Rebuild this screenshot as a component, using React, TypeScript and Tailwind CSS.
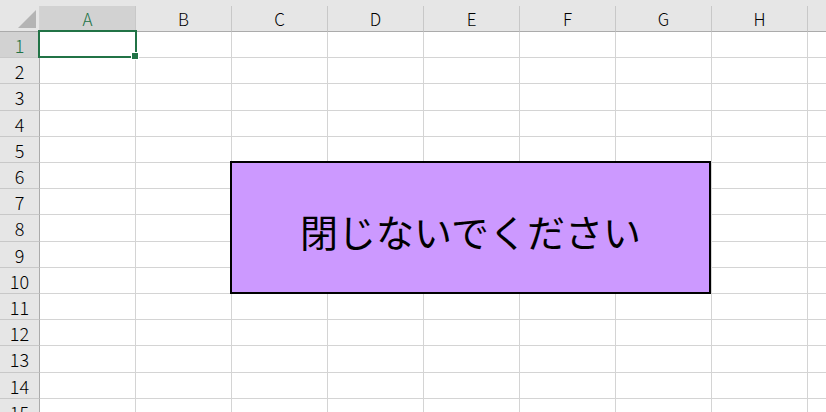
const COLS = ['A', 'B', 'C', 'D', 'E', 'F', 'G', 'H', 'I'];

// row heights include the 1px bottom gridline
const ROWS = [
  { n: 1, h: 'h-[26px]' },
  { n: 2, h: 'h-[26px]' },
  { n: 3, h: 'h-[27px]' },
  { n: 4, h: 'h-[26px]' },
  { n: 5, h: 'h-[26px]' },
  { n: 6, h: 'h-[26px]' },
  { n: 7, h: 'h-[26px]' },
  { n: 8, h: 'h-[27px]' },
  { n: 9, h: 'h-[26px]' },
  { n: 10, h: 'h-[26px]' },
  { n: 11, h: 'h-[26px]' },
  { n: 12, h: 'h-[26px]' },
  { n: 13, h: 'h-[27px]' },
  { n: 14, h: 'h-[26px]' },
  { n: 15, h: 'h-[26px]' },
];

export default function App() {
  return (
    <div className="relative w-[826px] h-[412px] overflow-hidden bg-white text-black font-['Noto_Sans_CJK_JP','Liberation_Sans',sans-serif]">
      <div className="h-[6px] bg-[#e6e6e6]" />

      {/* column headers */}
      <div className="flex h-[26px]">
        <div className="w-[40px] shrink-0 flex items-end justify-end pr-[3px] pb-[3px] bg-[#e6e6e6] border-r border-b border-r-[#d4d4d4] border-b-[#ababab]">
          <svg width="18" height="18" viewBox="0 0 18 18">
            <polygon points="18,0 18,18 0,18" fill="#b4b4b4" />
          </svg>
        </div>
        {COLS.map((c) => (
          <div
            key={c}
            className={`w-[96px] shrink-0 flex items-center justify-center text-[17px] font-light leading-none border-r border-b border-r-[#c8c8c8] border-b-[#ababab] ${
              c === 'A' ? 'bg-[#d2d2d2] text-[#217346]' : 'bg-[#e6e6e6]'
            }`}
          >
            {c}
          </div>
        ))}
      </div>

      {/* rows */}
      {ROWS.map(({ n, h }) => (
        <div key={n} className={`flex ${h}`}>
          <div
            className={`w-[40px] shrink-0 flex items-center justify-center text-[18px] font-light leading-none border-r border-b border-r-[#ababab] border-b-[#c8c8c8] ${
              n === 1 ? 'bg-[#d2d2d2] text-[#217346]' : 'bg-[#e6e6e6]'
            }`}
          >
            {n}
          </div>
          {COLS.map((c) => (
            <div key={c} className="w-[96px] shrink-0 border-r border-b border-[#d4d4d4]" />
          ))}
        </div>
      ))}

      {/* active cell A1 */}
      <div className="absolute left-[38px] top-[30px] w-[99px] h-[28px] border-2 border-[#217346]" />
      <div className="absolute left-[131px] top-[52px] w-[8px] h-[8px] bg-[#217346] border border-white" />

      {/* shape */}
      <div className="absolute left-[230px] top-[161px] w-[481px] h-[133px] border-2 border-black bg-[#cc99ff] flex items-center justify-center pt-[6px]">
        <span className="text-[38px] leading-none">閉じないでください</span>
      </div>
    </div>
  );
}
